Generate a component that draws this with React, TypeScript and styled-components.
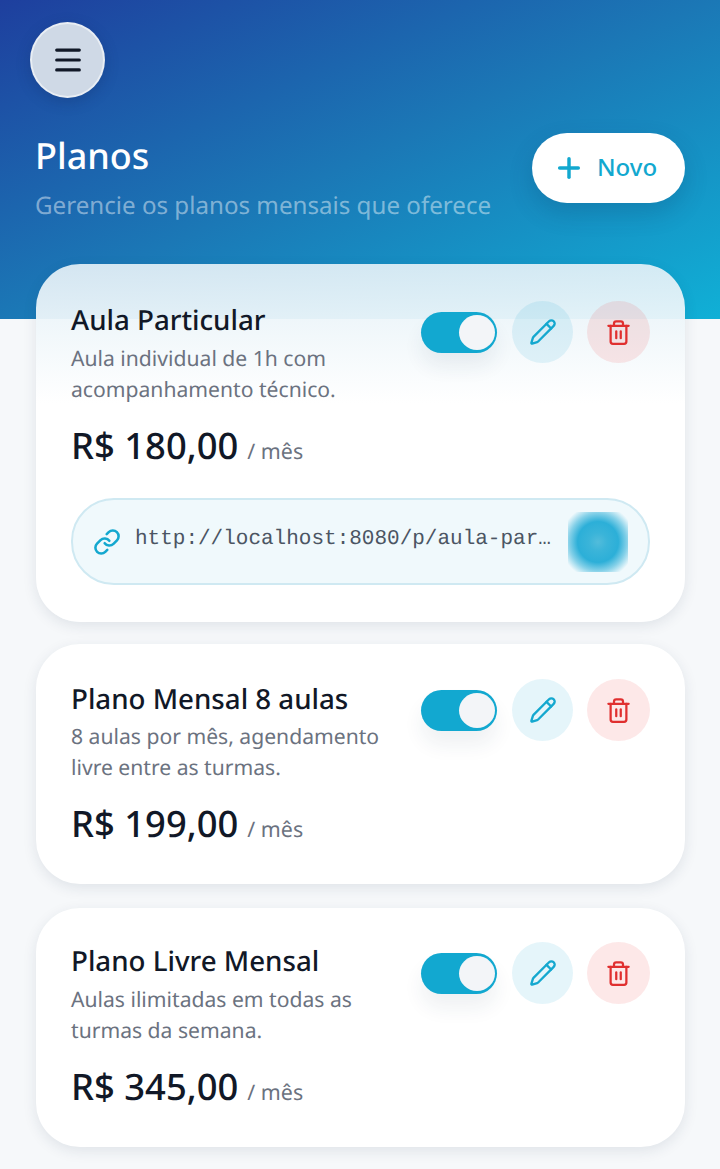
import React from "react";
import styled, { createGlobalStyle } from "styled-components";
import { Menu, Plus, Pencil, Trash2, Link } from "lucide-react";

const Global = createGlobalStyle`
  html, body { margin: 0; padding: 0; background: #f6f8fa; }
  body { font-family: "Noto Sans", "Open Sans", sans-serif; width: 720px; height: 1169px; overflow: hidden; text-rendering: geometricPrecision; }
  * { box-sizing: border-box; }
`;

const Page = styled.div`
  width: 720px;
  height: 1169px;
  background: #f6f8fa;
`;

const Header = styled.header`
  height: 319px;
  padding: 22px 35px 0 30px;
  background: linear-gradient(156deg, #1e3f9e 0%, #1b78b6 50%, #10b0d6 100%);
`;

const MenuButton = styled.button`
  width: 75px;
  height: 76px;
  border-radius: 50%;
  border: 2px solid rgba(255, 255, 255, 0.55);
  background: #cfd9e6;
  color: #111827;
  display: flex;
  align-items: center;
  justify-content: center;
  padding: 0;
  box-shadow: 0 4px 14px rgba(15, 40, 90, 0.25);
`;

const TitleRow = styled.div`
  margin-top: 35px;
  padding-left: 5px;
  display: flex;
  justify-content: space-between;
  align-items: flex-start;
`;

const TitleBlock = styled.div`
  display: flex;
  flex-direction: column;
`;

const Title = styled.h1`
  margin: -2px 0 0;
  font-size: 36px;
  line-height: 50px;
  font-weight: 500;
  color: #ffffff;
`;

const Subtitle = styled.p`
  margin: 9px 0 0;
  font-size: 24.15px;
  line-height: 32px;
  color: rgba(255, 255, 255, 0.45);
  white-space: nowrap;
`;

const NewButton = styled.button`
  width: 153px;
  height: 70px;
  border: 0;
  border-radius: 35px;
  background: #ffffff;
  color: #12a8cf;
  font-family: inherit;
  font-size: 24px;
  font-weight: 500;
  display: flex;
  align-items: center;
  gap: 12px;
  padding: 0 0 4px 21px;
  box-shadow: 0 10px 24px rgba(10, 50, 90, 0.2);

  svg {
    flex: none;
    margin-top: 4px;
  }
`;

const List = styled.main`
  margin-top: -55px;
  padding: 0 35px 0 36px;
  display: flex;
  flex-direction: column;
`;

const Card = styled.section<{ $glass?: boolean; $height: number; $gap: number; $top: number }>`
  height: ${(p) => p.$height}px;
  margin-bottom: ${(p) => p.$gap}px;
  border-radius: 44px;
  padding: ${(p) => p.$top}px 35px 0 35px;
  background: ${(p) =>
    p.$glass
      ? "linear-gradient(180deg, rgba(232,242,248,0.9) 0%, rgba(238,246,250,0.946) 15.4%, #ffffff 39%)"
      : "#ffffff"};
  box-shadow: 0 4px 14px rgba(30, 50, 80, 0.1);
`;

const Top = styled.div`
  display: flex;
  justify-content: space-between;
  align-items: flex-start;
`;

const Info = styled.div<{ $nudge: number }>`
  width: 330px;
  margin-top: ${(p) => p.$nudge}px;
`;

const PlanName = styled.h2`
  margin: 0;
  font-size: 27.7px;
  line-height: 40px;
  font-weight: 500;
  color: #111827;
  white-space: nowrap;
`;

const Description = styled.p<{ $gap: number }>`
  margin: ${(p) => p.$gap}px 0 0;
  font-size: 21.14px;
  line-height: 31px;
  color: #6b7280;
  white-space: nowrap;
`;

const Actions = styled.div`
  display: flex;
  align-items: flex-start;
  gap: 14px;
`;

const Toggle = styled.div`
  width: 76px;
  height: 41px;
  margin: 11px 1px 0 0;
  border-radius: 21px;
  background: #12a8d0;
  padding: 3px 2px;
  display: flex;
  justify-content: flex-end;
  box-shadow: 0 14px 20px rgba(30, 50, 80, 0.07);
`;

const Knob = styled.div`
  width: 36px;
  height: 35px;
  border-radius: 50%;
  background: #f3f5f8;
`;

const RoundButton = styled.button<{ $danger?: boolean }>`
  width: ${(p) => (p.$danger ? 63 : 61)}px;
  height: 62px;
  border: 0;
  padding: 0;
  border-radius: 50%;
  display: flex;
  align-items: center;
  justify-content: center;
  color: ${(p) => (p.$danger ? "#e02f2f" : "#14a8cf")};
  background: ${(p) =>
    p.$danger ? "rgba(239, 68, 68, 0.12)" : "rgba(20, 168, 207, 0.11)"};
`;

const PriceRow = styled.div`
  margin-top: 15px;
  display: flex;
  align-items: baseline;
  gap: 9px;
`;

const Price = styled.span`
  font-size: 36.4px;
  line-height: 50px;
  font-weight: 500;
  color: #111827;
`;

const Per = styled.span`
  font-size: 21.4px;
  color: #6b7280;
`;

const LinkBox = styled.div`
  margin-top: 28px;
  height: 87px;
  border: 2px solid #cfe9f2;
  border-radius: 43px;
  background: #f0f9fc;
  display: flex;
  align-items: center;
  padding: 0 20px;
  gap: 14px;
  color: #14a8cf;
`;

const LinkText = styled.span`
  flex: 1;
  min-width: 0;
  font-family: "Liberation Mono", monospace;
  font-size: 21px;
  color: #4b5563;
  white-space: nowrap;
  margin-top: -4px;
`;

const Blur = styled.div`
  width: 60px;
  height: 60px;
  flex: none;
  background: radial-gradient(
    circle,
    #52bcdb 0%,
    #3ab4d9 22%,
    #2cafd8 48%,
    rgba(44, 175, 216, 0.55) 68%,
    rgba(44, 175, 216, 0) 88%
  );
`;

const plans = [
  { name: "Aula Particular", d1: "Aula individual de 1h com", d2: "acompanhamento técnico.", price: "R$ 180,00", h: 358, gap: 22, glass: true, top: 37, nudge: -1, descGap: 3 },
  { name: "Plano Mensal 8 aulas", d1: "8 aulas por mês, agendamento", d2: "livre entre as turmas.", price: "R$ 199,00", h: 240, gap: 24, top: 35, nudge: 0, descGap: 2 },
  { name: "Plano Livre Mensal", d1: "Aulas ilimitadas em todas as", d2: "turmas da semana.", price: "R$ 345,00", h: 239, gap: 0, top: 34, nudge: -1, descGap: 3 },
];

export default function App() {
  return (
    <Page>
      <Global />
      <Header>
        <MenuButton aria-label="Menu">
          <Menu size={34} strokeWidth={2.2} />
        </MenuButton>
        <TitleRow>
          <TitleBlock>
            <Title>Planos</Title>
            <Subtitle>Gerencie os planos mensais que oferece</Subtitle>
          </TitleBlock>
          <NewButton>
            <Plus size={32} strokeWidth={2.6} />
            Novo
          </NewButton>
        </TitleRow>
      </Header>
      <List>
        {plans.map((p) => (
          <Card key={p.name} $glass={p.glass} $height={p.h} $gap={p.gap} $top={p.top}>
            <Top>
              <Info $nudge={p.nudge}>
                <PlanName>{p.name}</PlanName>
                <Description $gap={p.descGap}>
                  {p.d1}
                  <br />
                  {p.d2}
                </Description>
              </Info>
              <Actions>
                <Toggle>
                  <Knob />
                </Toggle>
                <RoundButton aria-label="Editar">
                  <Pencil size={28} strokeWidth={2} />
                </RoundButton>
                <RoundButton $danger aria-label="Excluir">
                  <Trash2 size={27} strokeWidth={2} />
                </RoundButton>
              </Actions>
            </Top>
            <PriceRow>
              <Price>{p.price}</Price>
              <Per>/ mês</Per>
            </PriceRow>
            {p.glass && (
              <LinkBox>
                <Link size={28} strokeWidth={2.2} />
                <LinkText>http://localhost:8080/p/aula-par…</LinkText>
                <Blur />
              </LinkBox>
            )}
          </Card>
        ))}
      </List>
    </Page>
  );
}
